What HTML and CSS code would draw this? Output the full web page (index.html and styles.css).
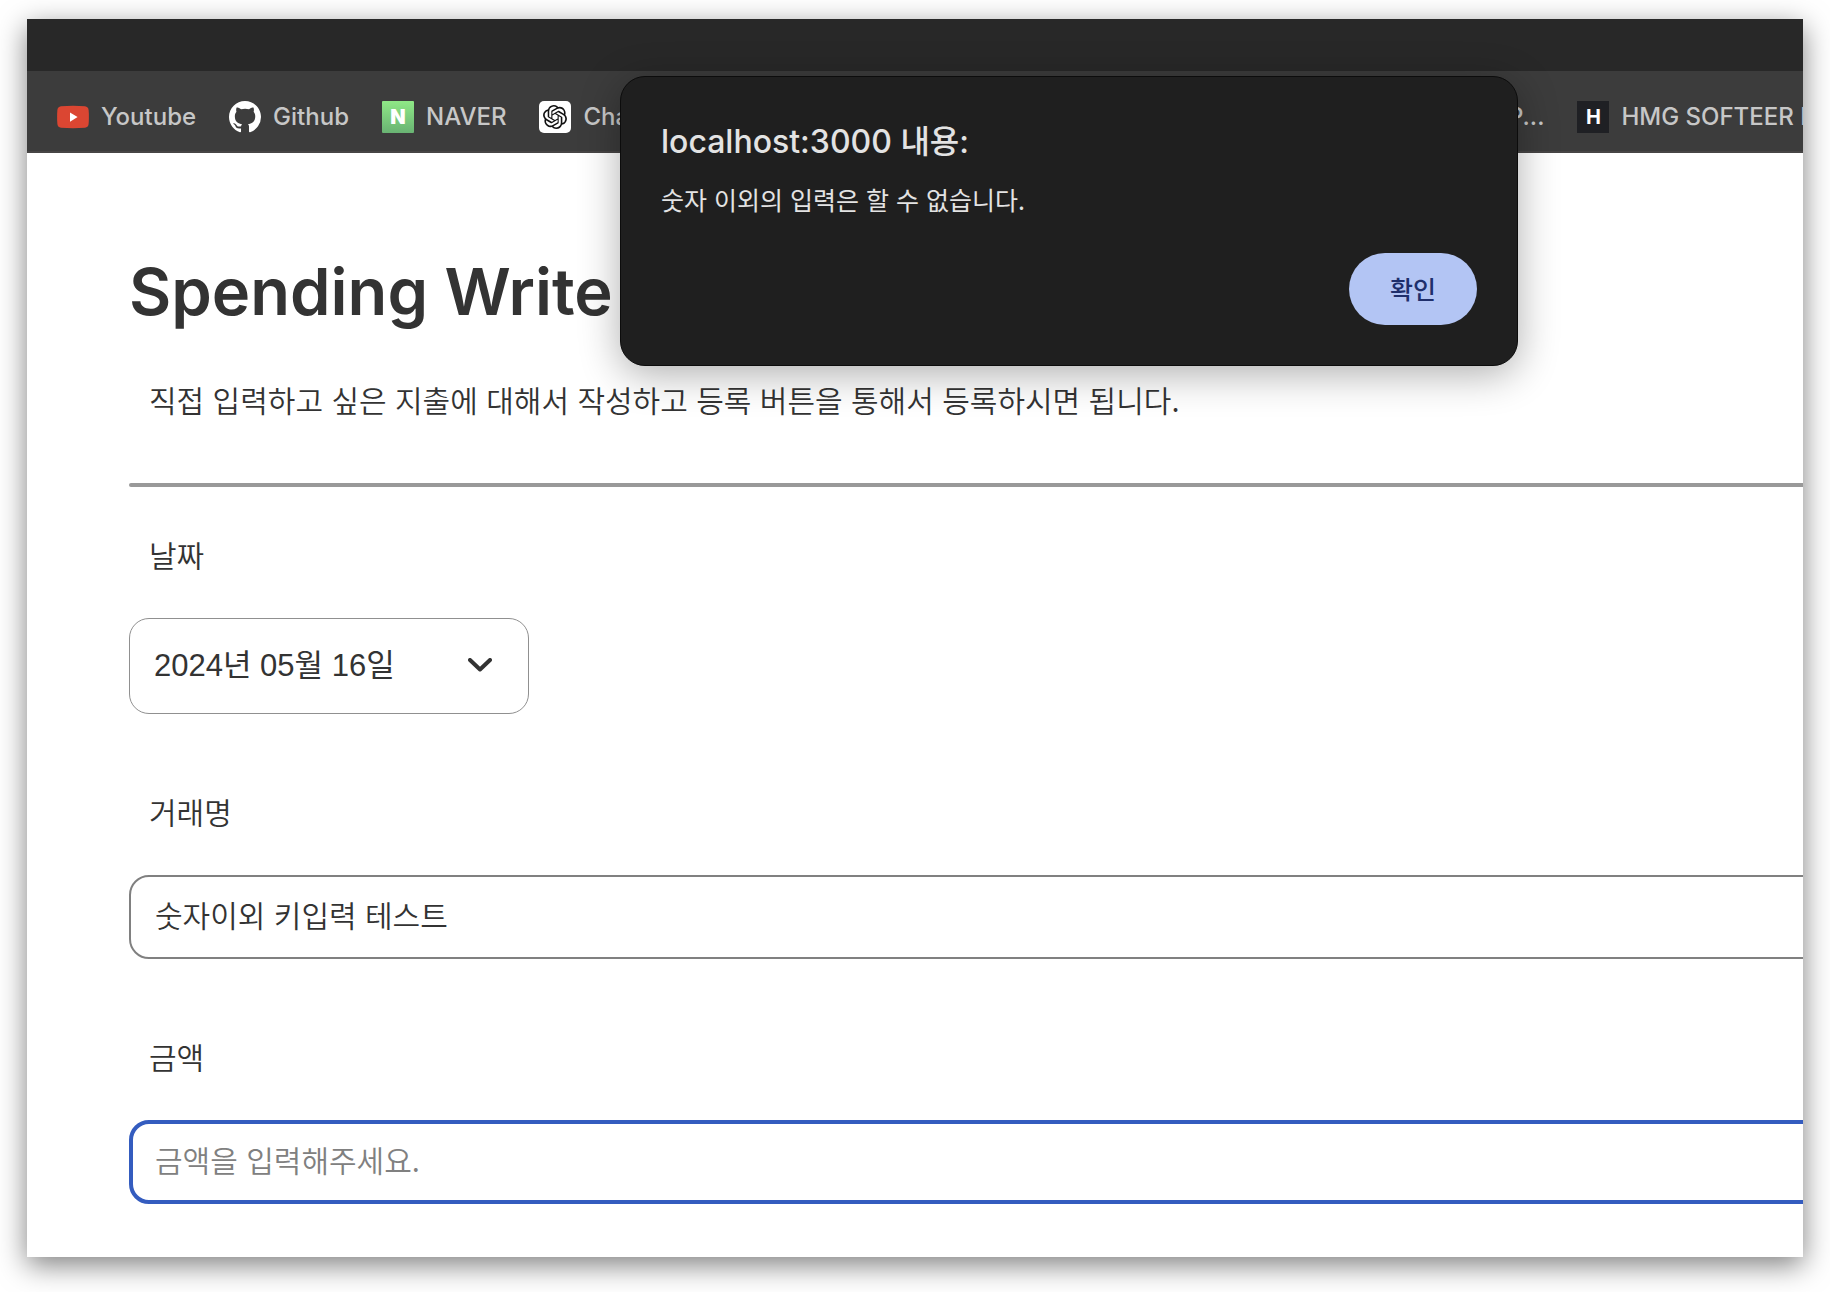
FILE: index.html
```html
<!DOCTYPE html>
<html lang="ko">
<head>
<meta charset="utf-8">
<meta name="viewport" content="width=device-width, initial-scale=1">
<title>Spending Write</title>
<link rel="stylesheet" href="styles.css">
</head>
<body>
<div class="window">
  <div class="titlebar"></div>
  <nav class="bookmarks" aria-label="Bookmarks">
    <div class="bookmarks-group">
      <a class="bookmark" href="#">
        <svg class="bookmark-icon" viewBox="0 0 32 32" aria-hidden="true"><path fill="#db4632" d="M4 5.3Q16 4.4 28 5.3Q31.300 5.700 31.600 9Q32.200 16 31.600 23Q31.300 26.300 28 26.700Q16 27.600 4 26.700Q.7 26.300.4 23Q-.2 16 .4 9Q.7 5.700 4 5.300Z"/><path fill="#fff" d="M13 11.500v9.200l7.600-4.600z"/></svg>
        <span>Youtube</span>
      </a>
      <a class="bookmark" href="#">
        <svg class="bookmark-icon" viewBox="0 0 16 16" aria-hidden="true"><path fill="#fff" d="M8 0C3.580 0 0 3.580 0 8c0 3.540 2.290 6.530 5.470 7.590.4.070.55-.17.55-.38 0-.19-.01-.82-.01-1.490-2.010.37-2.530-.49-2.690-.94-.09-.23-.48-.94-.82-1.130-.28-.15-.68-.52-.01-.53.63-.01 1.080.58 1.230.82.72 1.210 1.870.87 2.330.66.070-.52.28-.87.51-1.070-1.780-.2-3.640-.89-3.640-3.950 0-.87.31-1.590.82-2.150-.08-.2-.36-1.020.08-2.120 0 0 .67-.21 2.200.82.64-.18 1.320-.27 2-.27s1.360.09 2 .27c1.530-1.040 2.200-.82 2.200-.82.44 1.100.16 1.920.08 2.120.51.56.82 1.270.82 2.150 0 3.070-1.870 3.750-3.650 3.950.29.25.54.73.54 1.480 0 1.070-.01 1.930-.01 2.200 0 .21.15.46.55.38A8.010 8.010 0 0 0 16 8c0-4.420-3.580-8-8-8z"/></svg>
        <span>Github</span>
      </a>
      <a class="bookmark" href="#">
        <span class="bookmark-icon tile tile-naver" aria-hidden="true">N</span>
        <span>NAVER</span>
      </a>
      <a class="bookmark" href="#">
        <svg class="bookmark-icon" viewBox="0 0 32 32" aria-hidden="true"><rect width="32" height="32" rx="5" fill="#fff"/><path fill="#111" transform="translate(4 4)" d="M22.2819 9.8211a5.9847 5.9847 0 0 0-.5157-4.9108 6.0462 6.0462 0 0 0-6.5098-2.9A6.0651 6.0651 0 0 0 4.9807 4.1818a5.9847 5.9847 0 0 0-3.9977 2.9 6.0462 6.0462 0 0 0 .7427 7.0966 5.98 5.98 0 0 0 .511 4.9107 6.051 6.051 0 0 0 6.5146 2.9001A5.9847 5.9847 0 0 0 13.2599 24a6.0557 6.0557 0 0 0 5.7718-4.2058 5.9894 5.9894 0 0 0 3.9977-2.9001 6.0557 6.0557 0 0 0-.7475-7.0729zm-9.022 12.6081a4.4755 4.4755 0 0 1-2.8764-1.0408l.1419-.0804 4.7783-2.7582a.7948.7948 0 0 0 .3927-.6813v-6.7369l2.02 1.1686a.071.071 0 0 1 .038.052v5.5826a4.504 4.504 0 0 1-4.4945 4.4944zm-9.6607-4.1254a4.4708 4.4708 0 0 1-.5346-3.0137l.142.0852 4.783 2.7582a.7712.7712 0 0 0 .7806 0l5.8428-3.3685v2.3324a.0804.0804 0 0 1-.0332.0615L9.74 19.9502a4.4992 4.4992 0 0 1-6.1408-1.6464zM2.3408 7.8956a4.485 4.485 0 0 1 2.3655-1.9728V11.6a.7664.7664 0 0 0 .3879.6765l5.8144 3.3543-2.0201 1.1685a.0757.0757 0 0 1-.071 0l-4.8303-2.7865A4.504 4.504 0 0 1 2.3408 7.872zm16.5963 3.8558L13.1038 8.364 15.1192 7.2a.0757.0757 0 0 1 .071 0l4.8303 2.7913a4.4944 4.4944 0 0 1-.6765 8.1042v-5.6772a.79.79 0 0 0-.407-.667zm2.0107-3.0231l-.142-.0852-4.7735-2.7818a.7759.7759 0 0 0-.7854 0L9.409 9.2297V6.8974a.0662.0662 0 0 1 .0284-.0615l4.8303-2.7866a4.4992 4.4992 0 0 1 6.6802 4.66zM8.3065 12.863l-2.02-1.1638a.0804.0804 0 0 1-.038-.0567V6.0742a4.4992 4.4992 0 0 1 7.3757-3.4537l-.142.0805L8.704 5.459a.7948.7948 0 0 0-.3927.6813zm1.0976-2.3654l2.602-1.4998 2.6069 1.4998v2.9994l-2.5974 1.4997-2.6067-1.4997Z"/></svg>
        <span>ChatGPT</span>
      </a>
    </div>
    <div class="bookmarks-group bookmarks-group-end">
      <a class="bookmark" href="#"><span>P...</span></a>
      <a class="bookmark" href="#">
        <span class="bookmark-icon tile tile-hmg" aria-hidden="true">H</span>
        <span>HMG SOFTEER B</span>
      </a>
    </div>
  </nav>

  <main class="page">
    <h1 class="page-title">Spending Write</h1>
    <p class="page-intro">직접 입력하고 싶은 지출에 대해서 작성하고 등록 버튼을 통해서 등록하시면 됩니다.</p>
    <hr class="divider">
    <form class="form">
      <div class="field">
        <label class="field-label" for="date">날짜</label>
        <div class="select-box">
          <select class="control control-select" id="date">
            <option>2024년 05월 16일</option>
          </select>
          <svg class="chevron" viewBox="0 0 24 14" aria-hidden="true"><path d="M2 2l10 9.500L22 2" fill="none" stroke="#333" stroke-width="4" stroke-linecap="round" stroke-linejoin="round"/></svg>
        </div>
      </div>
      <div class="field">
        <label class="field-label" for="name">거래명</label>
        <input class="control control-text" id="name" type="text" value="숫자이외 키입력 테스트">
      </div>
      <div class="field">
        <label class="field-label" for="amount">금액</label>
        <input class="control control-text is-active" id="amount" type="text" placeholder="금액을 입력해주세요.">
      </div>
    </form>
  </main>

  <div class="dialog" role="alertdialog" aria-labelledby="dialog-title" aria-describedby="dialog-text">
    <h2 class="dialog-title" id="dialog-title">localhost:3000 내용:</h2>
    <p class="dialog-text" id="dialog-text">숫자 이외의 입력은 할 수 없습니다.</p>
    <button class="dialog-button" type="button">확인</button>
  </div>
</div>
</body>
</html>
```
FILE: styles.css
```css
* {
  box-sizing: border-box;
}

body {
  margin: 0;
  min-height: 100vh;
  display: flex;
  padding: 19px 27px 35px;
  background: #fff;
  color: #333;
  font-family: Inter, "Noto Sans CJK KR", sans-serif;
}

.window {
  position: relative;
  flex: 1;
  min-width: 0;
  background: #fff;
  box-shadow: 0 8px 27px rgba(0, 0, 0, 0.5);
}

.titlebar {
  height: 52px;
  background: #282828;
}

.bookmarks {
  display: flex;
  height: 82px;
  padding-left: 30px;
  border-bottom: 2px solid #474545;
  background: #3c3c3c;
}

.bookmarks-group {
  display: flex;
  flex: 1;
  min-width: 0;
  align-items: center;
  gap: 33px;
  padding-top: 12px;
  overflow: hidden;
}

.bookmarks-group-end {
  flex: 0 0 295px;
}

.bookmark {
  display: flex;
  flex: none;
  align-items: center;
  gap: 12px;
  color: #c7c7c7;
  font-size: 24px;
  font-weight: 500;
  line-height: 32px;
  text-decoration: none;
  white-space: nowrap;
}

.bookmark-icon {
  width: 32px;
  height: 32px;
}

.tile {
  color: #fff;
  font-size: 20px;
  line-height: 32px;
  text-align: center;
}

.tile-naver {
  border-radius: 1px;
  background: linear-gradient(#8fe886, #69b373);
  font-weight: 900;
}

.tile-hmg {
  background: #1f2024;
  font-weight: 700;
}

.page {
  padding: 99px 0 53px 102px;
  overflow: hidden;
}

.page-title {
  margin: 0;
  font-size: 65px;
  font-weight: 600;
  line-height: 80px;
}

.page-intro {
  margin: 47px 0 64px;
  padding-left: 20px;
  font-family: "Noto Sans CJK KR", sans-serif;
  font-size: 30px;
  font-weight: 350;
  line-height: 40px;
}

.divider {
  height: 4px;
  margin: 0 -20px 47px 0;
  border: 0;
  border-radius: 2px;
  background: #999;
}

.form {
  display: grid;
  gap: 77px;
  margin-right: -40px;
}

.field {
  display: grid;
  gap: 44px;
}

.field-label {
  padding-left: 20px;
  font-family: "Noto Sans CJK KR", sans-serif;
  font-size: 30px;
  font-weight: 350;
  line-height: 40px;
}

.control {
  width: 100%;
  border-radius: 20px;
  background: #fff;
  color: #333;
  outline: 0;
}

.select-box {
  position: relative;
  width: 400px;
}

.control-select {
  display: block;
  height: 96px;
  padding: 0 24px 2px;
  border: 1px solid #909090;
  appearance: none;
  font-family: "Liberation Sans", "Noto Sans CJK KR", sans-serif;
  font-size: 31px;
}

.chevron {
  position: absolute;
  top: 40px;
  right: 37px;
  width: 24px;
  height: 14px;
  pointer-events: none;
}

.control-text {
  height: 84px;
  padding: 0 24px 6px;
  border: 2px solid #808080;
  font-family: "Noto Sans CJK KR", sans-serif;
  font-size: 30px;
  font-weight: 350;
}

.control-text.is-active {
  padding: 0 22px 6px;
  border: 4px solid #345cbf;
}

.control-text::placeholder {
  color: #808080;
  opacity: 1;
}

.dialog {
  position: absolute;
  top: 57px;
  left: 593px;
  display: flex;
  flex-direction: column;
  width: 898px;
  padding: 43px 40px 40px;
  border: 1px solid #0c0c0c;
  border-radius: 25px;
  background: #1f1f1f;
  box-shadow: 0 8px 40px rgba(0, 0, 0, 0.32);
  color: #e3e3e3;
}

.dialog-title {
  margin: 0;
  font-size: 32px;
  font-weight: 500;
  line-height: 44px;
}

.dialog-text {
  margin: 17px 0 36px;
  font-family: "Noto Sans CJK KR", sans-serif;
  font-size: 25px;
  line-height: 36px;
}

.dialog-button {
  align-self: flex-end;
  width: 128px;
  height: 72px;
  padding: 0 0 2px;
  border: 0;
  border-radius: 36px;
  background: #b3c5f4;
  color: #1f2f6b;
  font-family: "Noto Sans CJK KR", sans-serif;
  font-size: 25px;
  font-weight: 500;
}
```
